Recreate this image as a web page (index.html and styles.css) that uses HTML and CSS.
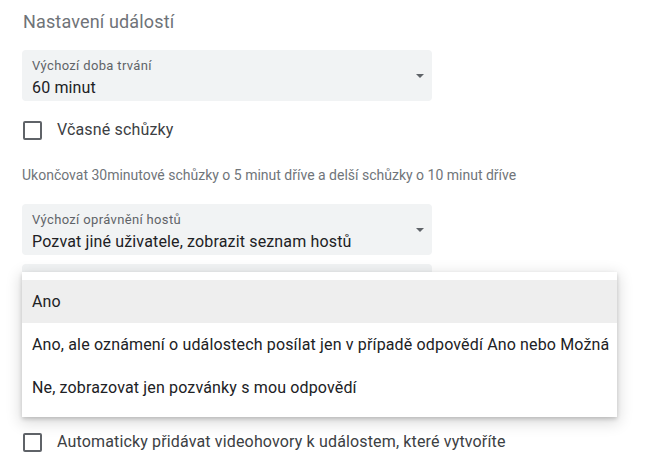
FILE: index.html
```html
<!DOCTYPE html>
<html lang="cs">
<head>
<meta charset="utf-8">
<title>Nastavení událostí</title>
<link rel="stylesheet" href="styles.css">
</head>
<body>
<div class="page">
  <h2 class="title">Nastavení událostí</h2>

  <div class="field field-first">
    <div class="field-text">
      <div class="field-label">Výchozí doba trvání</div>
      <div class="field-value">60 minut</div>
    </div>
    <span class="arrow"></span>
  </div>

  <label class="check-row check-first">
    <span class="checkbox"></span>
    <span class="check-label">Včasné schůzky</span>
  </label>

  <div class="helper">Ukončovat 30minutové schůzky o 5 minut dříve a delší schůzky o 10 minut dříve</div>

  <div class="field field-second">
    <div class="field-text">
      <div class="field-label">Výchozí oprávnění hostů</div>
      <div class="field-value">Pozvat jiné uživatele, zobrazit seznam hostů</div>
    </div>
    <span class="arrow"></span>
  </div>

  <div class="menu-anchor">
    <div class="field field-third">
      <div class="field-text">
        <div class="field-label">Zobrazovat pozvánky v kalendáři</div>
        <div class="field-value">Ano</div>
      </div>
      <span class="arrow"></span>
    </div>
    <ul class="menu">
      <li class="menu-item active">Ano</li>
      <li class="menu-item">Ano, ale oznámení o událostech posílat jen v případě odpovědí Ano nebo Možná</li>
      <li class="menu-item">Ne, zobrazovat jen pozvánky s mou odpovědí</li>
    </ul>
  </div>

  <label class="check-row check-last">
    <span class="checkbox"></span>
    <span class="check-label">Automaticky přidávat videohovory k událostem, které vytvoříte</span>
  </label>
</div>
</body>
</html>
```
FILE: styles.css
```css
html, body {
  margin: 0;
  padding: 0;
  background: #ffffff;
}

body {
  font-family: Roboto, "Noto Sans", Arial, sans-serif;
  color: #3c4043;
  width: 650px;
  height: 473px;
  overflow: hidden;
}

.page {
  padding: 10px 0 0 22px;
}

.title {
  margin: 0;
  font-size: 18px;
  line-height: 24px;
  font-weight: 400;
  letter-spacing: 0.15px;
  color: #6f7378;
  padding-left: 1px;
}

.field {
  width: 410px;
  height: 51px;
  box-sizing: border-box;
  background: #f1f3f4;
  border-radius: 4px;
  padding: 8px 8px 0 10px;
  display: flex;
  justify-content: space-between;
}

.field-first {
  margin-top: 16px;
}

.field-second {
  margin-top: 19px;
}

.field-text {
  display: flex;
  flex-direction: column;
}

.field-label {
  font-size: 13px;
  line-height: 16px;
  letter-spacing: 0.35px;
  color: #5f6368;
}

.field-value {
  font-size: 16px;
  line-height: 24px;
  letter-spacing: 0.15px;
  margin-top: 2px;
  color: #202124;
}

.arrow {
  width: 0;
  height: 0;
  border-left: 4px solid transparent;
  border-right: 4px solid transparent;
  border-top: 4px solid #5f6368;
  margin-top: 16px;
}

.check-row {
  display: flex;
  align-items: center;
  height: 24px;
}

.check-first {
  margin-top: 17px;
}

.checkbox {
  width: 19px;
  height: 19px;
  box-sizing: border-box;
  border: 2px solid #5f6368;
  border-radius: 2px;
  margin-left: 1px;
  flex: none;
}

.check-label {
  font-size: 16px;
  line-height: 24px;
  letter-spacing: 0.15px;
  margin-left: 15px;
  color: #3c4043;
}

.helper {
  margin-top: 23px;
  font-size: 14px;
  line-height: 20px;
  color: #70757a;
}

.menu-anchor {
  position: relative;
  margin-top: 9px;
}

.field-third {
  border-radius: 4px 4px 0 0;
}

.menu {
  position: absolute;
  top: 8px;
  left: 0;
  width: 595px;
  margin: 0;
  padding: 8px 0;
  list-style: none;
  background: #ffffff;
  box-shadow: 0 2px 4px rgba(0, 0, 0, 0.18), 0 4px 14px 2px rgba(0, 0, 0, 0.14);
  z-index: 2;
}

.menu-item {
  height: 43px;
  display: flex;
  align-items: center;
  padding-left: 10px;
  font-size: 16px;
  letter-spacing: 0.15px;
  color: #202124;
  white-space: nowrap;
}

.menu-item.active {
  background: #eeeeee;
}

.check-last {
  margin-top: 115px;
}
```
